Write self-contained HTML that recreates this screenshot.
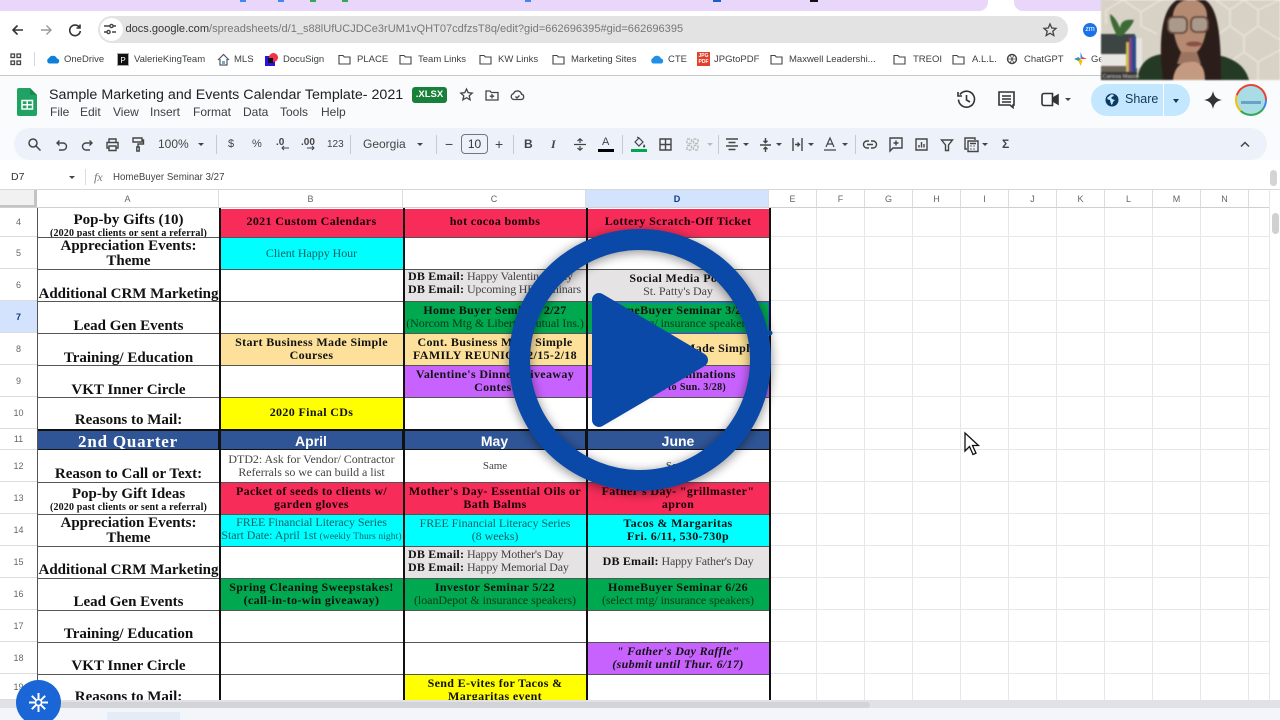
<!DOCTYPE html>
<html><head><meta charset="utf-8"><title>Sheet</title>
<style>
html,body{margin:0;padding:0;background:#fff}
#p{position:relative;width:1280px;height:720px;overflow:hidden;background:#fff;font-family:"Liberation Sans",sans-serif;filter:blur(.35px)}
#p div,#p span.t,#p svg.i{position:absolute}
.t{white-space:nowrap;color:#444}
.bm{top:54px;font-size:9.5px;line-height:12px;color:#3c4043;white-space:nowrap;position:absolute}
.m{top:105px;font-size:12px;line-height:14px;color:#3c4043;white-space:nowrap}
svg.i{fill:none;stroke:#444;stroke-width:1.4;overflow:visible}
.tb{position:absolute;top:138px;font-size:11px;line-height:13px;color:#444;white-space:nowrap}
.sep{top:135px;width:1px;height:19px;background:#c7c9cc}
.car{width:0;height:0;border-left:3px solid transparent;border-right:3px solid transparent;border-top:3.5px solid #444;top:143px}
.ch{top:190px;height:18px;line-height:18px;font-size:9px;color:#666;text-align:center;background:#fff;border-right:1px solid #dadce0;box-sizing:border-box}
.rh{left:0;width:37px;font-size:9px;color:#666;text-align:center;background:#fff;border-bottom:1px solid #dadce0;box-sizing:border-box;display:flex;align-items:center;justify-content:center}
.gv{top:208px;height:492px;width:1px;background:#e6e7e9}
.gh{left:769px;width:500px;height:1px;background:#e6e7e9}
.x{display:flex;flex-direction:column;align-items:center;justify-content:center;text-align:center;box-sizing:border-box;font-family:"Liberation Serif",serif;font-size:12px;line-height:13px;letter-spacing:-.05px;color:#444;white-space:nowrap;overflow:hidden;padding-bottom:2px}
.x b{color:#111;letter-spacing:.35px}
.A{left:38px;width:181px;font-size:15px;line-height:13px;font-weight:bold;color:#111;letter-spacing:0;justify-content:flex-end;padding-bottom:0}
.A2{line-height:15px}
.A small{font-size:10px;line-height:11px;letter-spacing:.15px;display:block}
.top{justify-content:flex-start}
.db{letter-spacing:-.2px}
.x .db b{letter-spacing:.2px}
.B{left:220px;width:183px}.C{left:404px;width:182px}.D{left:587px;width:182px}
.r4{top:209px;height:28px}.r5{top:238px;height:31px}.r6{top:270px;height:31px}.r7{top:302px;height:31px}.r8{top:334px;height:31px}.r9{top:366px;height:31px}.r10{top:398px;height:31px}
.r12{top:451px;height:31px}.r13{top:483px;height:31px}.r14{top:515px;height:31px}.r15{top:547px;height:31px}.r16{top:579px;height:31px}.r17{top:611px;height:31px}.r18{top:643px;height:31px}.r19{top:675px;height:31px}
.red{background:#f72c58}.cy{background:#00ffff}.gr{background:#00a84f}.or{background:#fde19a}.pu{background:#c862ff}.ye{background:#ffff00}.lg{background:#e6e3e4}
.red,.red b{color:#1a0008}
.hl{background:#2f5597;color:#fff;font-family:"Liberation Sans",sans-serif;font-weight:bold;font-size:14px;top:431px;height:18px;letter-spacing:0;padding:2px 0 0}
.hline{left:38px;width:731px;height:1px;background:#555}
.vline{top:208px;height:492px;width:2px;background:#111}
</style></head><body>
<div id="p">
<!-- tab strip -->
<div style="left:0;top:0;width:1280px;height:12px;background:#fff"></div>
<div style="left:0;top:0;width:988px;height:11px;background:#e9d6fb;border-radius:0 0 9px 0"></div>
<div style="left:1014px;top:0;width:100px;height:11px;background:#e9d6fb;border-radius:0 0 0 9px"></div>
<div style="left:240px;top:0;width:6px;height:2px;background:#4285f4"></div>
<div style="left:278px;top:0;width:6px;height:2px;background:#4285f4"></div>
<div style="left:310px;top:0;width:6px;height:2px;background:#34a853"></div>
<div style="left:342px;top:0;width:6px;height:2px;background:#34a853"></div>
<div style="left:525px;top:0;width:6px;height:2px;background:#4285f4"></div>
<div style="left:810px;top:0;width:8px;height:2px;background:#111"></div>
<div style="left:713px;top:0;width:8px;height:2px;background:#1a5fc4"></div>
<!-- address bar -->
<div style="left:98px;top:16px;width:970px;height:27px;background:#e3e3e3;border-radius:14px"></div>
<div style="left:100px;top:18px;width:23px;height:23px;background:#fff;border-radius:12px"></div>
<svg class="i" style="left:103px;top:22px" width="14" height="14" stroke-width="1.2"><path d="M1 4h6M10 4h3M1 10h3M9 10h4"/><circle cx="8.5" cy="4" r="1.6"/><circle cx="5.5" cy="10" r="1.6"/></svg>
<svg class="i" style="left:11px;top:23px;stroke:#333;stroke-width:1.6" width="14" height="14"><path d="M12 7H2M6.500 2.500L2 7l4.500 4.500"/></svg>
<svg class="i" style="left:39px;top:23px;stroke:#999" width="14" height="14"><path d="M2 7h10M7.500 2.500L12 7l-4.500 4.500"/></svg>
<svg class="i" style="left:68px;top:23px;stroke:#333;stroke-width:1.6" width="14" height="14"><path d="M11.500 4.500A5.300 5.300 0 1 0 12.300 8"/><path d="M12 1.500v3.500H8.500"/></svg>
<span class="t" style="left:125.500px;top:22px;font-size:11.05px;line-height:15px;color:#777"><span style="color:#333">docs.google.com</span>/spreadsheets/d/1_s88lUfUCJDCe3rUM1vQHT07cdfzsT8q/edit?gid=662696395#gid=662696395</span>
<svg class="i" style="left:1043px;top:23px;stroke-width:1.3" width="14" height="14"><path d="M7 1l1.800 4 4.200.4-3.200 2.800 1 4.300L7 10.200 3.200 12.500l1-4.300L1 5.400 5.200 5z"/></svg>
<div style="left:1083px;top:23px;width:14px;height:14px;border-radius:7px;background:#1a73e8;color:#fff;font-size:7px;line-height:14px;text-align:center">zm</div>
<!-- bookmarks -->
<svg class="i" style="left:10px;top:53px;stroke-width:1.3" width="12" height="13"><rect x="1" y="1" width="3.500" height="3.500"/><rect x="7" y="1" width="3.500" height="3.500"/><rect x="1" y="8" width="3.500" height="3.500"/><rect x="7" y="8" width="3.500" height="3.500"/></svg>
<div style="left:34px;top:52px;width:1px;height:14px;background:#d9d2e6"></div>
<svg class="i" style="left:46px;top:54px;stroke:none" width="14" height="10"><path fill="#0f7fd8" d="M3 9.500A3 3 0 0 1 3 4a4.500 4.500 0 0 1 8 .5A2.600 2.600 0 0 1 11.500 9.500z"/></svg>
<span class="bm" style="left:64px">OneDrive</span>
<div style="left:117px;top:53px;width:12px;height:13px;background:#111;color:#fff;font-size:8px;line-height:13px;text-align:center;border:1px solid #aaa;box-sizing:border-box">P</div>
<span class="bm" style="left:134px">ValerieKingTeam</span>
<svg class="i" style="left:217px;top:53px;stroke:#556;stroke-width:1.2" width="13" height="13"><path d="M1 7l5.500-5.500L12 7M3 6v6h7V6"/><rect x="5" y="8" width="3" height="4" fill="#7ab" stroke="none"/></svg>
<span class="bm" style="left:234px">MLS</span>
<div style="left:265px;top:56px;width:10px;height:10px;background:#2a12e0"></div>
<div style="left:269px;top:53px;width:9px;height:9px;background:#f0324a;border-radius:5px"></div>
<div style="left:268px;top:58px;width:5px;height:5px;background:#111"></div>
<span class="bm" style="left:283px">DocuSign</span>
<svg class="i" style="left:338px;top:53px;stroke-width:1.1" width="13" height="12"><path d="M1 2.500h4l1.300 1.500H12v7H1z"/></svg>
<span class="bm" style="left:357px">PLACE</span>
<svg class="i" style="left:399px;top:53px;stroke-width:1.1" width="13" height="12"><path d="M1 2.500h4l1.300 1.500H12v7H1z"/></svg>
<span class="bm" style="left:418px">Team Links</span>
<svg class="i" style="left:479px;top:53px;stroke-width:1.1" width="13" height="12"><path d="M1 2.500h4l1.300 1.500H12v7H1z"/></svg>
<span class="bm" style="left:498px">KW Links</span>
<svg class="i" style="left:552px;top:53px;stroke-width:1.1" width="13" height="12"><path d="M1 2.500h4l1.300 1.500H12v7H1z"/></svg>
<span class="bm" style="left:571px">Marketing Sites</span>
<svg class="i" style="left:650px;top:54px;stroke:none" width="14" height="10"><path fill="#1f8fe8" d="M3 9.500A3 3 0 0 1 3 4a4.500 4.500 0 0 1 8 .5A2.600 2.600 0 0 1 11.500 9.500z"/></svg>
<span class="bm" style="left:668px">CTE</span>
<div style="left:697px;top:52px;width:13px;height:14px;background:#e2402a;color:#fff;font-size:5px;line-height:6px;text-align:center;font-weight:bold;padding-top:1px;box-sizing:border-box">JPG<br>PDF</div>
<span class="bm" style="left:714px">JPGtoPDF</span>
<svg class="i" style="left:770px;top:53px;stroke-width:1.1" width="13" height="12"><path d="M1 2.500h4l1.300 1.500H12v7H1z"/></svg>
<span class="bm" style="left:789px">Maxwell Leadershi...</span>
<svg class="i" style="left:893px;top:53px;stroke-width:1.1" width="13" height="12"><path d="M1 2.500h4l1.300 1.500H12v7H1z"/></svg>
<span class="bm" style="left:913px">TREOI</span>
<svg class="i" style="left:952px;top:53px;stroke-width:1.1" width="13" height="12"><path d="M1 2.500h4l1.300 1.500H12v7H1z"/></svg>
<span class="bm" style="left:972px">A.L.L.</span>
<svg class="i" style="left:1006px;top:53px" width="12" height="12"><circle cx="6" cy="6" r="4.500"/><path d="M4 2l4 8M8 2L4 10M1.500 6h9" stroke-width=".8"/></svg>
<span class="bm" style="left:1024px">ChatGPT</span>
<svg class="i" style="left:1074px;top:52px;stroke:none" width="13" height="14"><path fill="#4285f4" d="M6.500 0l2 5-2 2z"/><path fill="#ea4335" d="M13 7L8.500 5l-2 2z"/><path fill="#fbbc04" d="M6.500 14l-2-5 2-2z"/><path fill="#34a853" d="M0 7l4.500 2 2-2z"/><path fill="#fbbc04" d="M6.500 7l2 2-2 5z"/><path fill="#4285f4" d="M0 7l4.500-2 2 2z"/></svg>
<span class="bm" style="left:1091px">Ge</span>
<!-- app bg -->
<div style="left:0;top:75px;width:1280px;height:1px;background:#c9c9c9"></div>
<div style="left:0;top:76px;width:1280px;height:89px;background:#f9fbfd"></div>
<!-- sheets logo -->
<svg class="i" style="left:17px;top:88px;stroke:none" width="20" height="28"><path fill="#1ea362" d="M2 0h11l7 7v19a2 2 0 0 1-2 2H2a2 2 0 0 1-2-2V2a2 2 0 0 1 2-2z"/><path fill="#188a50" d="M13 0l7 7h-7z"/><path fill="none" stroke="#fff" stroke-width="1.500" d="M5 12.500h10.500v8.500H5zM5 16.700h10.500M10.200 12.500v8.500"/></svg>
<span class="t" style="left:49px;top:86px;font-size:14.27px;line-height:18px;color:#1f1f1f">Sample Marketing and Events Calendar Template- 2021</span>
<div style="left:412px;top:87px;width:35px;height:16px;background:#188038;border-radius:3px;color:#fff;font-size:9.500px;font-weight:bold;line-height:16px;text-align:center">.XLSX</div>
<svg class="i" style="left:460px;top:88px;stroke-width:1.3" width="13" height="13"><path d="M6.500 1l1.700 3.700 4 .4-3 2.700.9 4-3.600-2.100-3.600 2.100.9-4-3-2.700 4-.4z"/></svg>
<svg class="i" style="left:485px;top:89px;stroke-width:1.3" width="14" height="12"><path d="M1 2h4l1.300 1.500H13v7.500H1zM7 5v4.500M4.800 7.200h4.400"/></svg>
<svg class="i" style="left:510px;top:89px;stroke-width:1.3" width="15" height="12"><path d="M4 10.500A3 3 0 0 1 3.500 4.600a4.200 4.200 0 0 1 8 .6A2.700 2.700 0 0 1 11.500 10.500zM5.500 7.500l1.500 1.500 2.500-2.500"/></svg>
<span class="t m" style="left:50px">File</span><span class="t m" style="left:80px">Edit</span><span class="t m" style="left:113px">View</span><span class="t m" style="left:150px">Insert</span><span class="t m" style="left:193px">Format</span><span class="t m" style="left:243px">Data</span><span class="t m" style="left:280px">Tools</span><span class="t m" style="left:321px">Help</span>
<!-- right header icons -->
<svg class="i" style="left:957px;top:90px;stroke:#333;stroke-width:1.6" width="19" height="19"><path d="M3 4.500A8 8 0 1 1 1.500 9.500M1 2v4h4M9.500 5v5l3.500 2"/></svg>
<svg class="i" style="left:998px;top:91px;stroke:#333;stroke-width:1.6" width="17" height="18"><path d="M1 1h15v13h-1v2.500L12 14H1zM4 5h9M4 8h9M4 11h9"/></svg>
<svg class="i" style="left:1041px;top:92px;stroke:#333;stroke-width:1.6" width="19" height="15"><path d="M3 1.500h8.500v12H3a2 2 0 0 1-2-2v-8a2 2 0 0 1 2-2z"/><path d="M12 6l5-3v9l-5-3z" fill="#333"/></svg>
<div class="car" style="left:1065px;top:98px"></div>
<div style="left:1091px;top:84px;width:99px;height:32px;background:#c2e7ff;border-radius:16px"></div>
<div style="left:1163px;top:84px;width:1px;height:32px;background:#fff"></div>
<svg class="i" style="left:1105px;top:93px;stroke:none" width="14" height="14"><circle cx="7" cy="7" r="6.500" fill="#0b3a5e"/><path fill="#c2e7ff" d="M6 1.500L2 5l1 1.500 2 .5 .5 2.500 1 2.500 1-1 .5-2 2-2-2-.5L6 5l1.500-1.500 1.500-.5-1-1.500z"/></svg>
<span class="t" style="left:1125px;top:92px;font-size:12.500px;line-height:15px;color:#103a55">Share</span>
<div class="car" style="left:1173px;top:99px;border-top-color:#103a55;border-left-width:3.500px;border-right-width:3.500px;border-top-width:4px"></div>
<svg class="i" style="left:1204px;top:91px;stroke:none" width="18" height="18"><path fill="#333" d="M9 0c1 5 3 8 9 9-6 1-8 4-9 9-1-5-3-8-9-9 6-1 8-4 9-9z"/></svg>
<div style="left:1235px;top:84px;width:32px;height:32px;border-radius:16px;background:conic-gradient(#ea4335 0 25%,#4285f4 25% 35%,#34a853 35% 62%,#fbbc04 62% 80%,#ea4335 80%)"></div>
<div style="left:1237px;top:86px;width:28px;height:28px;border-radius:14px;background:#a9dde6"></div>
<div style="left:1241px;top:101px;width:20px;height:3px;background:#2a66a8;opacity:.5"></div>
<!-- webcam -->
<svg class="i" style="left:1101px;top:0;stroke:none;filter:blur(.9px)" width="179" height="80" viewBox="0 0 179 80">
<rect width="179" height="80" fill="#d8d2c6"/>
<g fill="none" stroke="#e8e3d9" stroke-width="1.500"><path d="M115 0l14 10v16l-14 10v16l14 10v18M143 0l-14 10M129 26l14 10v16l-14 10M143 36l14-10V10L143 0M157 26l22 14M157 10l22-10M143 52l14 10v18M157 62l22-12M115 36l-14-8M115 52l-14 8M60 0L40 12v14l16 8M40 12L22 0M22 0L5 10v14"/></g>
<rect x="0" y="34" width="34" height="20" fill="#3d4543"/>
<rect x="0" y="54" width="28" height="12" fill="#e8e6e0"/>
<rect x="0" y="66" width="36" height="14" fill="#6b6358"/>
<path fill="#3d6a35" d="M16 36c-3-7-7-14-7-22 5 3 8 9 10 14 1-6 4-9 14-8-2 6-8 12-12 16z"/>
<rect x="25" y="42" width="3" height="30" fill="#c8bd4a"/><rect x="28" y="38" width="3" height="34" fill="#8a3f8a"/><rect x="31" y="36" width="4" height="36" fill="#2a4a8a"/><rect x="35" y="38" width="6" height="30" fill="#e8e4de"/>
<path fill="#243a25" d="M36 80c2-14 8-24 26-26l50 0c22 4 32 12 36 26z"/>
<path fill="#2b1e1a" d="M62 80C58 50 58 10 76 0h28c14 8 16 40 16 80z"/>
<path fill="#b58a72" d="M72 14c2-10 8-14 16-14h6c8 2 12 8 12 16 0 14-2 28-10 36-6 5-12 5-16 0-6-8-9-24-8-38z"/>
<path fill="#9c7260" d="M80 52h16l4 12H76z"/>
<rect x="67" y="17" width="19" height="16" rx="5" fill="#a99a8c" stroke="#6b4c40" stroke-width="1.800"/>
<rect x="90" y="17" width="17" height="15" rx="5" fill="#a99a8c" stroke="#6b4c40" stroke-width="1.800"/>
<ellipse cx="93" cy="44" rx="8" ry="2.500" fill="#8a5048"/>
<path fill="#c49a80" d="M72 80c1-10 6-18 16-18 10-2 16 4 16 18z"/>
<rect x="0" y="72" width="36" height="8" fill="#2a2a2a" opacity=".8"/>
<text x="1.500" y="78" font-size="5.500" fill="#ddd" font-family="Liberation Sans">Carissa Mason</text>
</svg>
<!-- toolbar -->
<div style="left:14px;top:128px;width:1253px;height:32px;background:#edf2fa;border-radius:16px"></div>
<svg class="i" style="left:28px;top:138px;stroke-width:1.5" width="13" height="13"><circle cx="5" cy="5" r="4"/><path d="M8 8l4.500 4.500"/></svg>
<svg class="i" style="left:56px;top:139px" width="11" height="12"><path d="M1 4h6a3.500 3.500 0 0 1 0 7H3M3.500 1.500L1 4l2.500 2.500"/></svg>
<svg class="i" style="left:82px;top:139px" width="11" height="12"><path d="M10 4H4a3.500 3.500 0 0 0 0 7h4M7.500 1.500L10 4 7.500 6.500"/></svg>
<svg class="i" style="left:106px;top:138px" width="13" height="13"><path d="M3 4V1h7v3M3 10H1V4.500h11V10h-2M3 8h7v4.500H3z"/></svg>
<svg class="i" style="left:132px;top:137px" width="12" height="15"><path d="M1 1h9v4H1zM10 3h1.500v4H6v3M4.800 10h2.400v4H4.800z"/></svg>
<span class="tb" style="left:158px;font-size:12px">100%</span><div class="car" style="left:198px"></div>
<div class="sep" style="left:216px"></div>
<span class="tb" style="left:228px">$</span><span class="tb" style="left:252px">%</span>
<span class="tb" style="left:276px;top:136px;font-size:10px;font-weight:bold">.0</span><svg class="i" style="left:281px;top:145px;stroke-width:1" width="9" height="6"><path d="M8 3H1M3 1L1 3l2 2"/></svg>
<span class="tb" style="left:301px;top:136px;font-size:10px;font-weight:bold">.00</span><svg class="i" style="left:306px;top:145px;stroke-width:1" width="9" height="6"><path d="M1 3h7M6 1l2 2-2 2"/></svg>
<span class="tb" style="left:327px;font-size:10px">123</span>
<div class="sep" style="left:350px"></div>
<span class="tb" style="left:363px;font-size:12px">Georgia</span><div class="car" style="left:417px"></div>
<div class="sep" style="left:436px"></div>
<span class="tb" style="left:445px;font-size:14px">−</span>
<div style="left:461px;top:134px;width:27px;height:20px;border:1px solid #747775;border-radius:4px;box-sizing:border-box;font-size:12px;line-height:18px;text-align:center;color:#333">10</div>
<span class="tb" style="left:495px;font-size:14px">+</span>
<div class="sep" style="left:513px"></div>
<span class="tb" style="left:524px;font-size:12px;font-weight:bold">B</span>
<span class="tb" style="left:551px;font-size:12px;font-weight:bold;font-style:italic;font-family:'Liberation Serif'">I</span>
<svg class="i" style="left:574px;top:138px;stroke-width:1.2" width="12" height="13"><path d="M0 6.500h12M3.500 3L6 .8 8.500 3M3.500 10L6 12.200 8.500 10M6 1v4M6 8v4"/></svg>
<span class="tb" style="left:602px;top:136px;font-size:11px">A</span><div style="left:598px;top:149px;width:16px;height:3px;background:#000"></div>
<div class="sep" style="left:622px"></div>
<svg class="i" style="left:632px;top:136px;stroke-width:1.2" width="14" height="12"><path d="M3 6l4-4 4 4-4 4zM5 1l2 1"/><path d="M12 8c1 1.500 1.500 2 1 3s-2 .5-2-.5z" fill="#444" stroke="none"/></svg>
<div style="left:631px;top:149px;width:16px;height:3px;background:#00a84f"></div>
<svg class="i" style="left:659px;top:138px" width="13" height="13"><path d="M1 1h11v11H1zM1 6.500h11M6.500 1v11"/></svg>
<svg class="i" style="left:686px;top:138px;stroke:#bbb" width="13" height="13" stroke-dasharray="3 1.500"><path d="M1 1h4.500v4.500H1zM7.500 1H12v4.500H7.500zM1 7.500h4.500V12H1zM7.500 7.500H12V12H7.500z"/></svg>
<div class="car" style="left:707px;border-top-color:#bbb"></div>
<div class="sep" style="left:718px"></div>
<svg class="i" style="left:726px;top:138px" width="12" height="13"><path d="M0 1h12M2.500 4.500h7M0 8h12M2.500 11.500h7"/></svg><div class="car" style="left:743px"></div>
<svg class="i" style="left:760px;top:138px" width="11" height="14"><path d="M0 7h11M5.500 0v4.500M3.500 2.700l2 2 2-2M5.500 14V9.500M3.500 11.300l2-2 2 2"/></svg><div class="car" style="left:776px"></div>
<svg class="i" style="left:792px;top:138px" width="11" height="13"><path d="M1 0v13M10 0v13M3 6.500h4M5.500 4.500l2 2-2 2"/></svg><div class="car" style="left:808px"></div>
<svg class="i" style="left:824px;top:137px;stroke-width:1.2" width="12" height="15"><path d="M2 10L6 1l4 9M3.500 7h5M0 13h12"/></svg><div class="car" style="left:842px"></div>
<div class="sep" style="left:855px"></div>
<svg class="i" style="left:863px;top:140px" width="14" height="9"><path d="M6 1H4a3.500 3.500 0 0 0 0 7h2M8 1h2a3.500 3.500 0 0 1 0 7H8M4 4.500h6"/></svg>
<svg class="i" style="left:889px;top:137px" width="14" height="15"><path d="M1 1h12v10H4l-3 3zM7 3.500v5M4.500 6h5"/></svg>
<svg class="i" style="left:915px;top:138px" width="13" height="13"><path d="M1 1h11v11H1zM4 9.500V7M6.500 9.500V4M9 9.500V6"/></svg>
<svg class="i" style="left:941px;top:139px" width="12" height="12"><path d="M.5 1h11L7.500 6v5.500h-3V6z"/></svg>
<svg class="i" style="left:964px;top:137px" width="15" height="15"><path d="M3 12H1V1h10v2M4 4h10v10.500H4zM6 6.500h6M6.500 9h1M9.500 9h1M6.500 12h1M9.500 12h1"/></svg><div class="car" style="left:982px"></div>
<span class="tb" style="left:1002px;font-size:12px;font-weight:bold">Σ</span>
<svg class="i" style="left:1240px;top:141px;stroke-width:1.5" width="10" height="7"><path d="M1 5.500L5 1.500l4 4"/></svg>
<!-- formula bar -->
<div style="left:0;top:160px;width:1280px;height:30px;background:#fff"></div>
<span class="t" style="left:11px;top:171px;font-size:10.500px;line-height:13px;color:#333">D7</span>
<div class="car" style="left:69px;top:176px"></div>
<div style="left:85px;top:169px;width:1px;height:16px;background:#dadce0"></div>
<span class="t" style="left:94px;top:170px;font-size:12px;line-height:14px;font-family:'Liberation Serif';font-style:italic;color:#777">fx</span>
<span class="t" style="left:113px;top:171px;font-size:9.700px;line-height:13px;color:#444">HomeBuyer Seminar 3/27</span>
<div style="left:1270px;top:170px;width:7px;height:16px;background:#d4d4d4;border-radius:4px"></div>
<div style="left:0;top:189px;width:1280px;height:1px;background:#d8d8d8"></div>
<!-- column headers -->
<div style="left:0;top:190px;width:37px;height:18px;background:#f1f1f1;border-right:3px solid #c4c4c4;border-bottom:3px solid #c4c4c4;box-sizing:border-box"></div>
<div class="ch" style="left:37px;width:182px">A</div><div class="ch" style="left:219px;width:184px">B</div><div class="ch" style="left:403px;width:183px">C</div><div class="ch" style="left:586px;width:183px;background:#d3e3fd;color:#0b3a7a;font-weight:bold">D</div>
<div class="ch" style="left:769px;width:48px">E</div><div class="ch" style="left:817px;width:48px">F</div><div class="ch" style="left:865px;width:48px">G</div><div class="ch" style="left:913px;width:48px">H</div><div class="ch" style="left:961px;width:48px">I</div><div class="ch" style="left:1009px;width:48px">J</div><div class="ch" style="left:1057px;width:48px">K</div><div class="ch" style="left:1105px;width:48px">L</div><div class="ch" style="left:1153px;width:48px">M</div><div class="ch" style="left:1201px;width:48px">N</div>
<div style="left:0;top:207px;width:1269px;height:1px;background:#d0d0d0"></div>
<!-- row headers -->
<div class="rh" style="top:208px;height:29px">4</div><div class="rh" style="top:237px;height:32px">5</div><div class="rh" style="top:269px;height:32px">6</div><div class="rh" style="top:301px;height:32px;background:#d3e3fd;font-weight:bold;color:#0b3a7a">7</div><div class="rh" style="top:333px;height:32px">8</div><div class="rh" style="top:365px;height:32px">9</div><div class="rh" style="top:397px;height:32px">10</div><div class="rh" style="top:429px;height:21px">11</div><div class="rh" style="top:450px;height:32px">12</div><div class="rh" style="top:482px;height:32px">13</div><div class="rh" style="top:514px;height:32px">14</div><div class="rh" style="top:546px;height:32px">15</div><div class="rh" style="top:578px;height:32px">16</div><div class="rh" style="top:610px;height:32px">17</div><div class="rh" style="top:642px;height:32px">18</div><div class="rh" style="top:674px;height:26px">19</div>
<!-- right gridlines -->
<div class="gv" style="left:816px"></div><div class="gv" style="left:864px"></div><div class="gv" style="left:912px"></div><div class="gv" style="left:960px"></div><div class="gv" style="left:1008px"></div><div class="gv" style="left:1056px"></div><div class="gv" style="left:1104px"></div><div class="gv" style="left:1152px"></div><div class="gv" style="left:1200px"></div><div class="gv" style="left:1248px"></div>
<div class="gh" style="top:236px"></div><div class="gh" style="top:268px"></div><div class="gh" style="top:300px"></div><div class="gh" style="top:332px"></div><div class="gh" style="top:364px"></div><div class="gh" style="top:396px"></div><div class="gh" style="top:428px"></div><div class="gh" style="top:449px"></div><div class="gh" style="top:481px"></div><div class="gh" style="top:513px"></div><div class="gh" style="top:545px"></div><div class="gh" style="top:577px"></div><div class="gh" style="top:609px"></div><div class="gh" style="top:641px"></div><div class="gh" style="top:673px"></div>
<!-- vertical scrollbar -->
<div style="left:1269px;top:190px;width:11px;height:510px;background:#fff;border-left:1px solid #e6e7e9;box-sizing:border-box"></div>
<div style="left:1272px;top:213px;width:7px;height:21px;background:#d0d0d0;border-radius:4px"></div>
<!-- column A -->
<div class="x A A2 top r4" style="padding:4px 0 0"><span>Pop-by Gifts (10)</span><small>(2020 past clients or sent a referral)</small></div>
<div class="x A A2 r5" style="justify-content:center;padding-top:1px"><span>Appreciation Events:</span><span>Theme</span></div>
<div class="x A r6">Additional CRM Marketing</div>
<div class="x A r7">Lead Gen Events</div>
<div class="x A r8">Training/ Education</div>
<div class="x A r9">VKT Inner Circle</div>
<div class="x A r10" style="padding-bottom:2px">Reasons to Mail:</div>
<div class="x A r12" style="padding-bottom:1px">Reason to Call or Text:</div>
<div class="x A A2 r13" style="padding-bottom:1px"><span>Pop-by Gift Ideas</span><small>(2020 past clients or sent a referral)</small></div>
<div class="x A A2 r14" style="justify-content:center;padding-top:1px"><span>Appreciation Events:</span><span>Theme</span></div>
<div class="x A r15" style="padding-bottom:1px">Additional CRM Marketing</div>
<div class="x A r16" style="padding-bottom:1px">Lead Gen Events</div>
<div class="x A r17" style="padding-bottom:1px">Training/ Education</div>
<div class="x A r18" style="padding-bottom:1px">VKT Inner Circle</div>
<div class="x A r19" style="padding-bottom:2px">Reasons to Mail:</div>
<!-- Q1 rows -->
<div class="x B r4 red" style="padding-bottom:4px"><b>2021 Custom Calendars</b></div>
<div class="x C r4 red" style="padding-bottom:4px"><b>hot cocoa bombs</b></div>
<div class="x D r4 red" style="padding-bottom:4px"><b>Lottery Scratch-Off Ticket</b></div>
<div class="x B r5 cy" style="color:#0f5f66;padding-bottom:0">Client Happy Hour</div>
<div class="x C r6 lg" style="align-items:flex-start;padding:0 0 6px 4px"><span class="db"><b>DB Email:</b> Happy Valentine's Day</span><span class="db"><b>DB Email:</b> Upcoming HB Seminars</span></div>
<div class="x D r6 lg" style="padding-bottom:1px"><b>Social Media Post</b><span>St. Patty's Day</span></div>
<div class="x C r7 gr" style="color:#0b3a1c"><b>Home Buyer Seminar 2/27</b><span>(Norcom Mtg &amp; Liberty Mutual Ins.)</span></div>
<div class="x D r7 gr" style="color:#0b3a1c;outline:1.500px solid #1a73e8;outline-offset:-1px"><b>HomeBuyer Seminar 3/27</b><span>(select mtg/ insurance speakers)</span></div>
<div class="x B r8 or"><b>Start Business Made Simple</b><b>Courses</b></div>
<div class="x C r8 or"><b>Cont. Business Made Simple</b><b>FAMILY REUNION 2/15-2/18</b></div>
<div class="x D r8 or"><b>Cont. Business Made Simple</b></div>
<div class="x C r9 pu"><b>Valentine's Dinner Giveaway</b><b>Contest</b></div>
<div class="x D r9 pu" style="color:#111"><b>Teacher Nominations</b><b style="font-size:10px">(submit to Sun. 3/28)</b></div>
<div class="x B r10 ye"><b>2020 Final CDs</b></div>
<!-- header row -->
<div style="left:37px;top:429px;width:733px;height:21px;background:#111"></div>
<div class="x hl" style="left:38px;width:180px;font-family:'Liberation Serif',serif;font-size:17px;letter-spacing:.8px">2nd Quarter</div>
<div class="x hl B" style="width:182px">April</div><div class="x hl C" style="width:181px">May</div><div class="x hl D">June</div>
<!-- Q2 rows -->
<div class="x B r12"><span>DTD2: Ask for Vendor/ Contractor</span><span>Referrals so we can build a list</span></div>
<div class="x C r12" style="font-size:11px;padding-bottom:0">Same</div><div class="x D r12" style="font-size:11px;padding-bottom:0">Same</div>
<div class="x B r13 red"><b>Packet of seeds to clients w/</b><b>garden gloves</b></div>
<div class="x C r13 red"><b>Mother's Day- Essential Oils or</b><b>Bath Balms</b></div>
<div class="x D r13 red"><b>Father's Day- "grillmaster"</b><b>apron</b></div>
<div class="x B r14 cy" style="color:#0f5f66"><span>FREE Financial Literacy Series</span><span>Start Date: April 1st <span style="font-size:9.500px;letter-spacing:.1px">(weekly Thurs night)</span></span></div>
<div class="x C r14 cy" style="color:#0f5f66"><span>FREE Financial Literacy Series</span><span>(8 weeks)</span></div>
<div class="x D r14 cy"><b>Tacos &amp; Margaritas</b><b>Fri. 6/11, 530-730p</b></div>
<div class="x C r15 lg" style="align-items:flex-start;padding:0 0 4px 4px"><span class="db"><b>DB Email:</b> Happy Mother's Day</span><span class="db"><b>DB Email:</b> Happy Memorial Day</span></div>
<div class="x D r15 lg"><span class="db"><b>DB Email:</b> Happy Father's Day</span></div>
<div class="x B r16 gr"><b>Spring Cleaning Sweepstakes!</b><b>(call-in-to-win giveaway)</b></div>
<div class="x C r16 gr" style="color:#0b3a1c"><b>Investor Seminar 5/22</b><span>(loanDepot &amp; insurance speakers)</span></div>
<div class="x D r16 gr" style="color:#0b3a1c"><b>HomeBuyer Seminar 6/26</b><span>(select mtg/ insurance speakers)</span></div>
<div class="x D r18 pu"><b><i>" Father's Day Raffle"</i></b><b><i>(submit until Thur. 6/17)</i></b></div>
<div class="x C r19 ye" style="justify-content:flex-start;padding:2px 0 0"><b>Send E-vites for Tacos &amp;</b><b>Margaritas event</b></div>
<!-- borders -->
<div class="hline" style="top:237px"></div><div class="hline" style="top:269px"></div><div class="hline" style="top:301px"></div><div class="hline" style="top:333px"></div><div class="hline" style="top:365px"></div><div class="hline" style="top:397px"></div>
<div class="hline" style="top:482px"></div><div class="hline" style="top:514px"></div><div class="hline" style="top:546px"></div><div class="hline" style="top:578px"></div><div class="hline" style="top:610px"></div><div class="hline" style="top:642px"></div><div class="hline" style="top:674px"></div>
<div class="vline" style="left:37px;width:1px;background:#555"></div><div class="vline" style="left:218.500px"></div><div class="vline" style="left:402.500px"></div><div class="vline" style="left:585.500px"></div><div class="vline" style="left:768.500px"></div>
<!-- bottom -->
<div style="left:0;top:700px;width:1280px;height:8px;background:#e0e2e5"></div>
<div style="left:0;top:708px;width:1280px;height:12px;background:#f2f5f9"></div>
<div style="left:107px;top:712px;width:73px;height:8px;background:#e4ecf8"></div>
<div style="left:60px;top:702px;width:810px;height:6px;background:#d2d4d7;border-radius:3px"></div>
<!-- cursor -->
<svg class="i" style="left:964px;top:432px;stroke:#111;stroke-width:1.3" width="16" height="24"><path fill="#fff" d="M1 1v18l4.500-4.500 3.500 8 3-1.300-3.500-7.700h6z"/></svg>
<!-- video overlay -->
<svg class="i" style="left:480px;top:200px;stroke:none" width="320" height="320" viewBox="480 200 320 320">
<defs><filter id="sh" x="-20%" y="-20%" width="140%" height="140%"><feGaussianBlur stdDeviation="5"/></filter></defs>
<circle cx="640" cy="362" r="120.500" fill="none" stroke="#000" stroke-opacity=".4" stroke-width="23" filter="url(#sh)"/>
<circle cx="640" cy="360" r="120.500" fill="none" stroke="#0a49a8" stroke-width="21"/>
<path fill="#000" fill-opacity=".3" filter="url(#sh)" d="M599 302L702 361 599 422z"/>
<path fill="#0a49a8" stroke="#0a49a8" stroke-width="14" stroke-linejoin="round" d="M599 300L701 360 599 420z"/>
<circle cx="770" cy="333" r="2.500" fill="#0a49a8"/>
</svg>
<!-- floating button -->
<div style="left:16px;top:680px;width:45px;height:45px;border-radius:23px;background:#1a66d6"></div>
<svg class="i" style="left:29px;top:693px;stroke:#fff;stroke-width:2" width="19" height="19"><path d="M9.500 0v19M0 9.500h19M2.800 2.800l13.400 13.400M16.200 2.800L2.800 16.200"/><circle cx="9.500" cy="9.500" r="3" fill="#1a66d6" stroke-width="1.500"/></svg>
</div>
</body></html>
